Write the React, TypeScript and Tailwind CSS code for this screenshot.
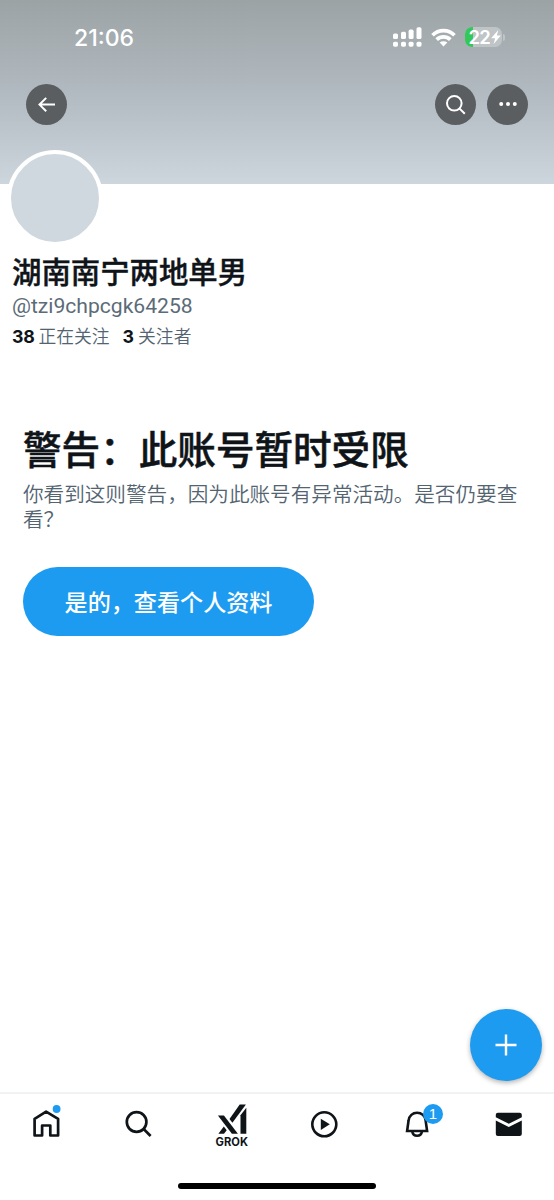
import * as React from "react"

function SignalIcon() {
  return (
    <svg width="29" height="20" viewBox="0 0 29 20" fill="#fff">
      <rect x="0" y="6.5" width="5" height="5.5" rx="1.6" />
      <rect x="8" y="4.7" width="5" height="7.3" rx="1.6" />
      <rect x="15.6" y="2.6" width="5" height="9.4" rx="1.6" />
      <rect x="23.5" y="0.3" width="5" height="11.7" rx="1.6" />
      {[0, 8, 15.6, 23.5].map((x) => (
        <rect key={x} x={x} y="14.7" width="5" height="5" rx="1.6" />
      ))}
    </svg>
  )
}

function WifiIcon() {
  return (
    <svg width="25" height="19" viewBox="0 0 26 19" fill="none" stroke="#fff" strokeWidth="3.9">
      <path d="M1.6 7.2C8 0.8 18 0.8 24.4 7.2" />
      <path d="M5.9 11.8C10 7.9 16 7.9 20.1 11.8" />
      <path d="M13 18.8L9 14.8C11.4 12.9 14.6 12.9 17 14.8Z" fill="#fff" stroke="none" />
    </svg>
  )
}

function BatteryIcon() {
  return (
    <div className="flex items-center gap-[1.5px]">
      <div className="relative flex h-5 w-[37px] items-center rounded-[7px] bg-[#bfc4c7] pl-1">
        <div className="absolute inset-y-0 left-0 w-2 rounded-l-[7px] bg-[#34c759]" />
        <span className="relative text-[18.5px] leading-6 font-semibold tracking-[-0.9px] text-white">22</span>
        <svg className="relative ml-px shrink-0" width="10" height="14" viewBox="0 0 9 13" fill="#fff">
          <path d="M6.6 0L0 7.6H3.7L2.3 13L9 5.1H5.3Z" />
        </svg>
      </div>
      <div className="h-[7px] w-[2px] rounded-r-full bg-[#bfc4c7]" />
    </div>
  )
}

function RoundButton({ label, children }: { label: string; children: React.ReactNode }) {
  return (
    <button aria-label={label} className="flex size-[41px] items-center justify-center rounded-full bg-[#5b5e61]">
      {children}
    </button>
  )
}

function Header() {
  return (
    <header className="h-[184px] bg-linear-to-b from-[#9ba3a5] via-[#b2bac1] to-[#cdd6dc]">
      <div className="flex h-[74px] items-center justify-between pr-[49px] pl-[74px]">
        <span className="pt-[2px] text-[23px] leading-7 font-medium text-white">21:06</span>
        <div className="flex items-center gap-[9px]">
          <SignalIcon />
          <WifiIcon />
          <BatteryIcon />
        </div>
      </div>
      <div className="flex items-center justify-between px-[26px] pt-[10px]">
        <RoundButton label="返回">
          <svg width="18" height="16" viewBox="0 0 18 16" fill="none" stroke="#fff" strokeWidth="2">
            <path d="M17 7.6H2M8.2 0.9L1.5 7.6L8.2 14.3" />
          </svg>
        </RoundButton>
        <div className="flex gap-[11px]">
          <RoundButton label="搜索">
            <svg width="20" height="20" viewBox="0 0 20 20" fill="none" stroke="#fff" strokeWidth="2">
              <circle cx="8.3" cy="8.3" r="7.3" />
              <path d="M13.6 13.6L18.8 18.8" />
            </svg>
          </RoundButton>
          <RoundButton label="更多">
            <svg width="18" height="5" viewBox="0 0 18 5" fill="#fff">
              <circle cx="2.2" cy="2" r="2" />
              <circle cx="9" cy="2" r="2" />
              <circle cx="15.8" cy="2" r="2" />
            </svg>
          </RoundButton>
        </div>
      </div>
    </header>
  )
}

function Profile() {
  return (
    <section className="px-3">
      <div className="relative -mt-[34px] -ml-[5px] size-24 rounded-full border-[4.5px] border-white bg-[#ced8de]" />
      <h1 className="mt-[6px] text-[29.4px] leading-[42px] font-medium [-webkit-text-stroke:0.4px_#0f1419]">
        湖南南宁两地单男
      </h1>
      <p className="-mt-px font-[Roboto,sans-serif] text-[21.1px] leading-[25px] text-[#5b6b78]">@tzi9chpcgk64258</p>
      <div className="mt-[7px] flex gap-[13px] text-[17.8px] leading-6 font-[350] text-[#536471]">
        <span>
          <b className="mr-1 font-bold tracking-[-0.3px] text-[#0f1419]">38</b>正在关注
        </span>
        <span>
          <b className="mr-1 font-bold text-[#0f1419]">3</b>关注者
        </span>
      </div>
    </section>
  )
}

function Warning() {
  return (
    <section className="mt-[73px] px-[23px]">
      <h2 className="text-[38.6px] leading-[56px] font-medium [-webkit-text-stroke:0.5px_#0f1419]">
        警告：此账号暂时受限
      </h2>
      <p className="mt-[5px] text-[20.6px] leading-[24.5px] font-[350] text-[#536471]">
        你看到这则警告，因为此账号有异常活动。是否仍要查看？
      </p>
      <button className="mt-[35px] h-[69px] w-[291px] rounded-full bg-[#1d9bf0] pt-[3px] text-[23.1px] font-medium text-white">
        是的，查看个人资料
      </button>
    </section>
  )
}

function NavItem({ label, children }: { label: string; children: React.ReactNode }) {
  return (
    <button aria-label={label} className="flex flex-1 justify-center">
      {children}
    </button>
  )
}

function BottomNav() {
  return (
    <nav className="flex h-[90px] border-t-2 border-[#eff3f4] pt-[9px]">
      <NavItem label="主页">
        <svg width="32" height="36" viewBox="30.2 1103 32 36" fill="none" stroke="#0f1419" strokeWidth="2.7">
          <path d="M46.3 1111.6L58.3 1118.8V1135.5H50.5V1125.5H42.3V1135.5H34.8V1118.8Z" strokeLinejoin="round" />
          <circle cx="56.8" cy="1109" r="3.9" fill="#1d9bf0" stroke="none" />
        </svg>
      </NavItem>
      <NavItem label="搜索">
        <svg width="32" height="36" viewBox="122.2 1103 32 36" fill="none" stroke="#0f1419" strokeWidth="2.7">
          <circle cx="136.8" cy="1122" r="9.8" />
          <path d="M143.6 1128.8L150.8 1136" />
        </svg>
      </NavItem>
      <NavItem label="Grok">
        <span className="flex w-9 flex-col items-center">
          <svg width="32" height="32" viewBox="215.1 1102.7 32 32" fill="#0f1419">
            <path d="M218 1115.2H224L238 1133.5H232Z" />
            <path d="M218.5 1133.5L223.9 1126.2L226.8 1129.9L224.1 1133.5Z" />
            <path d="M229.6 1118.6L239.8 1104.2H246L232.5 1122.4Z" />
            <path d="M240.6 1115L246.4 1107.4V1133.5H240.6Z" />
          </svg>
          <span className="mt-px ml-[2px] text-[11.2px] leading-3 font-bold">GROK</span>
        </span>
      </NavItem>
      <NavItem label="视频">
        <svg width="32" height="36" viewBox="307.2 1103 32 36" fill="none" stroke="#0f1419" strokeWidth="2.6">
          <circle cx="324.5" cy="1124.3" r="12" />
          <path d="M321 1118.7L330 1124.3L321 1130Z" fill="#0f1419" stroke="none" />
        </svg>
      </NavItem>
      <NavItem label="通知">
        <span className="relative">
          <svg width="32" height="36" viewBox="399.3 1103 32 36" fill="none" stroke="#0f1419" strokeWidth="2.6">
            <path d="M407.4 1131L408.9 1120.3C409.4 1115.9 412.9 1112.7 417.4 1112.7S425.4 1115.9 425.9 1120.3L427.4 1131Z" />
            <path d="M412.6 1131.5C413 1134.2 415 1135.8 417.4 1135.8S421.8 1134.2 422.2 1131.5" />
          </svg>
          <span className="absolute top-px left-[23.5px] flex size-5 items-center justify-center rounded-full bg-[#1d9bf0] font-[Liberation_Sans,sans-serif] text-[15px] leading-5 text-white">
            1
          </span>
        </span>
      </NavItem>
      <NavItem label="私信">
        <svg width="32" height="36" viewBox="492.2 1103 32 36" fill="#0f1419">
          <path d="M496 1114.8Q496 1112.7 498.1 1112.7H519.8Q522 1112.7 522 1114.8V1117.2L509 1123.7L496 1117.2Z" />
          <path d="M496 1120.4L509 1127L522 1120.4V1134Q522 1136.1 519.8 1136.1H498.1Q496 1136.1 496 1134Z" />
        </svg>
      </NavItem>
    </nav>
  )
}

export default function App() {
  return (
    <div className="flex h-screen flex-col bg-white font-[Inter,'Noto_Sans_CJK_SC',sans-serif] text-[#0f1419]">
      <Header />
      <Profile />
      <Warning />
      <div className="mt-auto flex justify-end pr-3 pb-[11px]">
        <button
          aria-label="发帖"
          className="flex size-[72px] items-center justify-center rounded-full bg-[#1d9bf0] shadow-[0_2px_5px_rgba(0,0,0,0.3)]"
        >
          <svg width="22" height="22" viewBox="0 0 22 22" stroke="#fff" strokeWidth="2.4">
            <path d="M11 0.5V21.5M0.5 11H21.5" />
          </svg>
        </button>
      </div>
      <BottomNav />
      <div className="flex h-[18px] justify-center">
        <div className="mt-[1px] h-[6px] w-[198px] rounded-full bg-black" />
      </div>
    </div>
  )
}
